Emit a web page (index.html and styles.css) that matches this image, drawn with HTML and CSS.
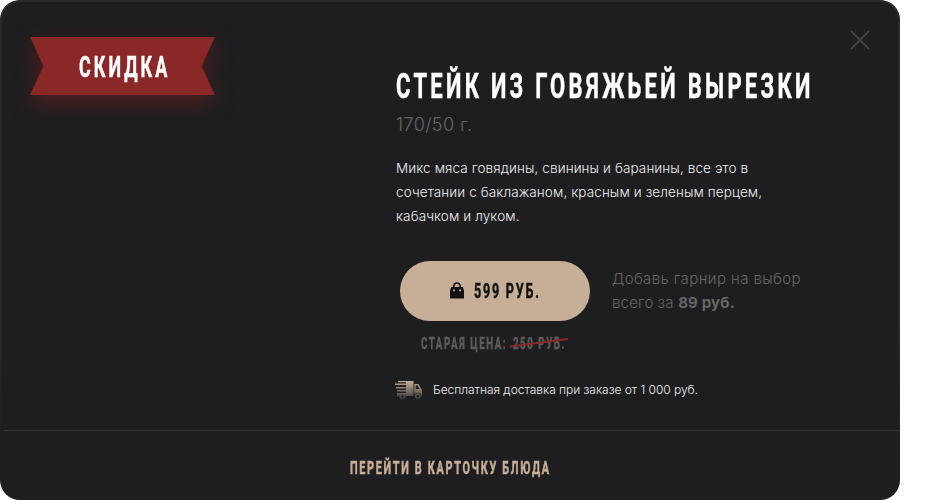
FILE: index.html
```html
<!DOCTYPE html>
<html lang="ru">
<head>
<meta charset="utf-8">
<title>Стейк из говяжьей вырезки</title>
<link rel="stylesheet" href="styles.css">
</head>
<body>
<article class="card">
  <div class="main">
    <div class="media">
      <div class="ribbon">
        <svg class="ribbon-shape" width="185" height="58" viewBox="0 0 185 58"><path d="M0 0H185L171.500 29L185 58H0L13.500 29Z" fill="#8a2828"/></svg>
        <span class="ribbon-text display">СКИДКА</span>
      </div>
    </div>
    <div class="info">
      <h1 class="title display">СТЕЙК ИЗ ГОВЯЖЬЕЙ ВЫРЕЗКИ</h1>
      <div class="weight">170/50 г.</div>
      <p class="desc">
        <span class="d1">Микс мяса говядины, свинины и баранины, все это в</span>
        <span class="d2">сочетании с баклажаном, красным и зеленым перцем,</span>
        <span class="d3">кабачком и луком.</span>
      </p>
      <div class="buy">
        <button class="btn">
          <svg class="bag" width="14" height="17" viewBox="0 0 14 17"><path d="M1 5H13L14 9V16.500H0V9Z" fill="#111"/><path d="M3.800 6V4.500Q3.800 1 7 1T10.200 4.500V6" fill="none" stroke="#111" stroke-width="1.700"/><path d="M3 7.500H4.800V9.200H3ZM9.200 7.500H11V9.200H9.200Z" fill="#c7ae96"/></svg>
          <span class="price display">599 РУБ.</span>
        </button>
        <p class="garnish"><span class="g1">Добавь гарнир на выбор</span><span class="g2">всего за <b>89 руб.</b></span></p>
      </div>
      <div class="old">
        <span class="old-label display">СТАРАЯ ЦЕНА:</span>
        <span class="old-price"><span class="old-value display">250 РУБ.</span>
          <svg class="strike" width="60" height="12" viewBox="0 0 60 12"><path d="M1 9.500L59 2" stroke="#8a2828" stroke-width="2"/></svg>
        </span>
      </div>
      <div class="delivery">
        <svg width="28" height="20" viewBox="0 0 28 20">
          <defs><linearGradient id="truck" gradientUnits="userSpaceOnUse" x1="0" y1="1" x2="0" y2="19"><stop offset="0" stop-color="#c7ae96"/><stop offset="1" stop-color="#3d3835"/></linearGradient></defs>
          <path d="M3 1H18.500V16H11A3.800 3.800 0 0 0 4 16H2V13H11V11.500H2V10H11V8.500H1V7H11V5H0V3.500H11V2.300H3ZM19.300 4H23.500L26 8.500L27 10V16H26.300A3.800 3.800 0 0 0 19.300 14.500ZM20.800 5.500V9H24.500L22.700 5.500Z" fill="url(#truck)" fill-rule="evenodd"/>
          <circle cx="7.500" cy="16.300" r="2.100" fill="none" stroke="url(#truck)" stroke-width="1.800"/><circle cx="22.800" cy="16.300" r="2.100" fill="none" stroke="url(#truck)" stroke-width="1.800"/>
        </svg>
        <span class="delivery-text">Бесплатная доставка при заказе от 1 000 руб.</span>
      </div>
    </div>
    <svg class="close" width="20" height="20" viewBox="0 0 20 20"><path d="M1 1L19 19M19 1L1 19" stroke="#434344" stroke-width="2"/></svg>
  </div>
  <a class="footer"><span class="link display">ПЕРЕЙТИ В КАРТОЧКУ БЛЮДА</span></a>
</article>
</body>
</html>
```

FILE: styles.css
```css
* { box-sizing: border-box; }
body { margin: 0; background: #fff; font-family: Inter, sans-serif; }
.card {
  position: relative;
  display: flex;
  flex-direction: column;
  width: 900px;
  height: 500px;
  overflow: hidden;
  border-radius: 20px;
  background: #1e1e20;
}
.card::after {
  content: "";
  position: absolute;
  inset: 0;
  border: 2px solid #2a2a2c;
  border-radius: 20px;
  mask-image: linear-gradient(#000 60%, transparent 90%);
  pointer-events: none;
}
.display {
  display: block;
  font-family: Roboto, sans-serif;
  font-weight: 700;
  white-space: nowrap;
  transform-origin: left center;
  -webkit-text-stroke: .5px currentColor;
}
.main { display: flex; height: 430px; }
.media { width: 396px; padding: 37px 0 0 30px; }
.ribbon { position: relative; display: flex; align-items: center; width: 185px; height: 58px; }
.ribbon-shape { position: absolute; inset: 0; overflow: visible; filter: drop-shadow(0 8px 10px rgba(138,30,30,.5)); }
.ribbon-text { position: relative; top: 1px; margin-left: 49px; font-size: 30px; line-height: 58px; color: #fff; letter-spacing: 5px; transform: scaleX(.6); }
.info { width: 440px; padding-top: 63px; }
.title { margin: 0; width: 415px; font-size: 35.500px; line-height: 47px; letter-spacing: 5.300px; color: #fff; transform: scaleX(.62); }
.weight { margin-top: 3px; font-size: 18px; line-height: 24px; font-weight: 300; color: #666; letter-spacing: .4px; white-space: nowrap; }
.desc { margin: 19px 0 0; font-size: 13.500px; line-height: 24px; color: #f0f0f0; font-weight: 300; letter-spacing: .11px; }
.desc span, .garnish span { display: block; white-space: nowrap; }
.buy { display: flex; align-items: center; gap: 22px; margin: 33px 0 0 4px; }
.btn { display: flex; align-items: center; gap: 10px; width: 190px; height: 60px; padding: 0 0 0 50px; border: 0; border-radius: 30px; background: #c7ae96; }
.bag { margin-top: -2px; }
.price { font-size: 20px; line-height: 22px; padding-bottom: 1px; color: #111; letter-spacing: 2.800px; transform: scaleX(.63); }
.garnish { font-size: 15px; line-height: 24px; margin: 0; color: #666; font-weight: 300; }
.g1 { letter-spacing: .4px; }
.g2 { letter-spacing: .18px; }
.garnish b { font-weight: 700; }
.old { display: flex; margin: 13px 0 0 25px; height: 20px; color: #5d5d5d; font-size: 16px; line-height: 20px; letter-spacing: 2.500px; }
.old-label { width: 92px; transform: scaleX(.61); }
.old-price { position: relative; }
.old-value { transform: scaleX(.61); }
.strike { position: absolute; left: -4px; top: 3px; }
.delivery { display: flex; align-items: center; gap: 10px; height: 20px; margin: 26px 0 0 -1px; font-size: 12px; line-height: 20px; color: #f0f0f0; font-weight: 300; white-space: nowrap; }
.delivery-text { letter-spacing: -.03px; }
.close { margin: 30px 0 0 14px; }
.footer { display: flex; height: 70px; margin-left: 4px; padding: 5px 0 0 346px; align-items: center; border-top: 1px solid #323234; color: #c7ae96; }
.link { width: 200px; font-size: 17.500px; line-height: 24px; letter-spacing: 2.700px; transform: scaleX(.62); }
```
